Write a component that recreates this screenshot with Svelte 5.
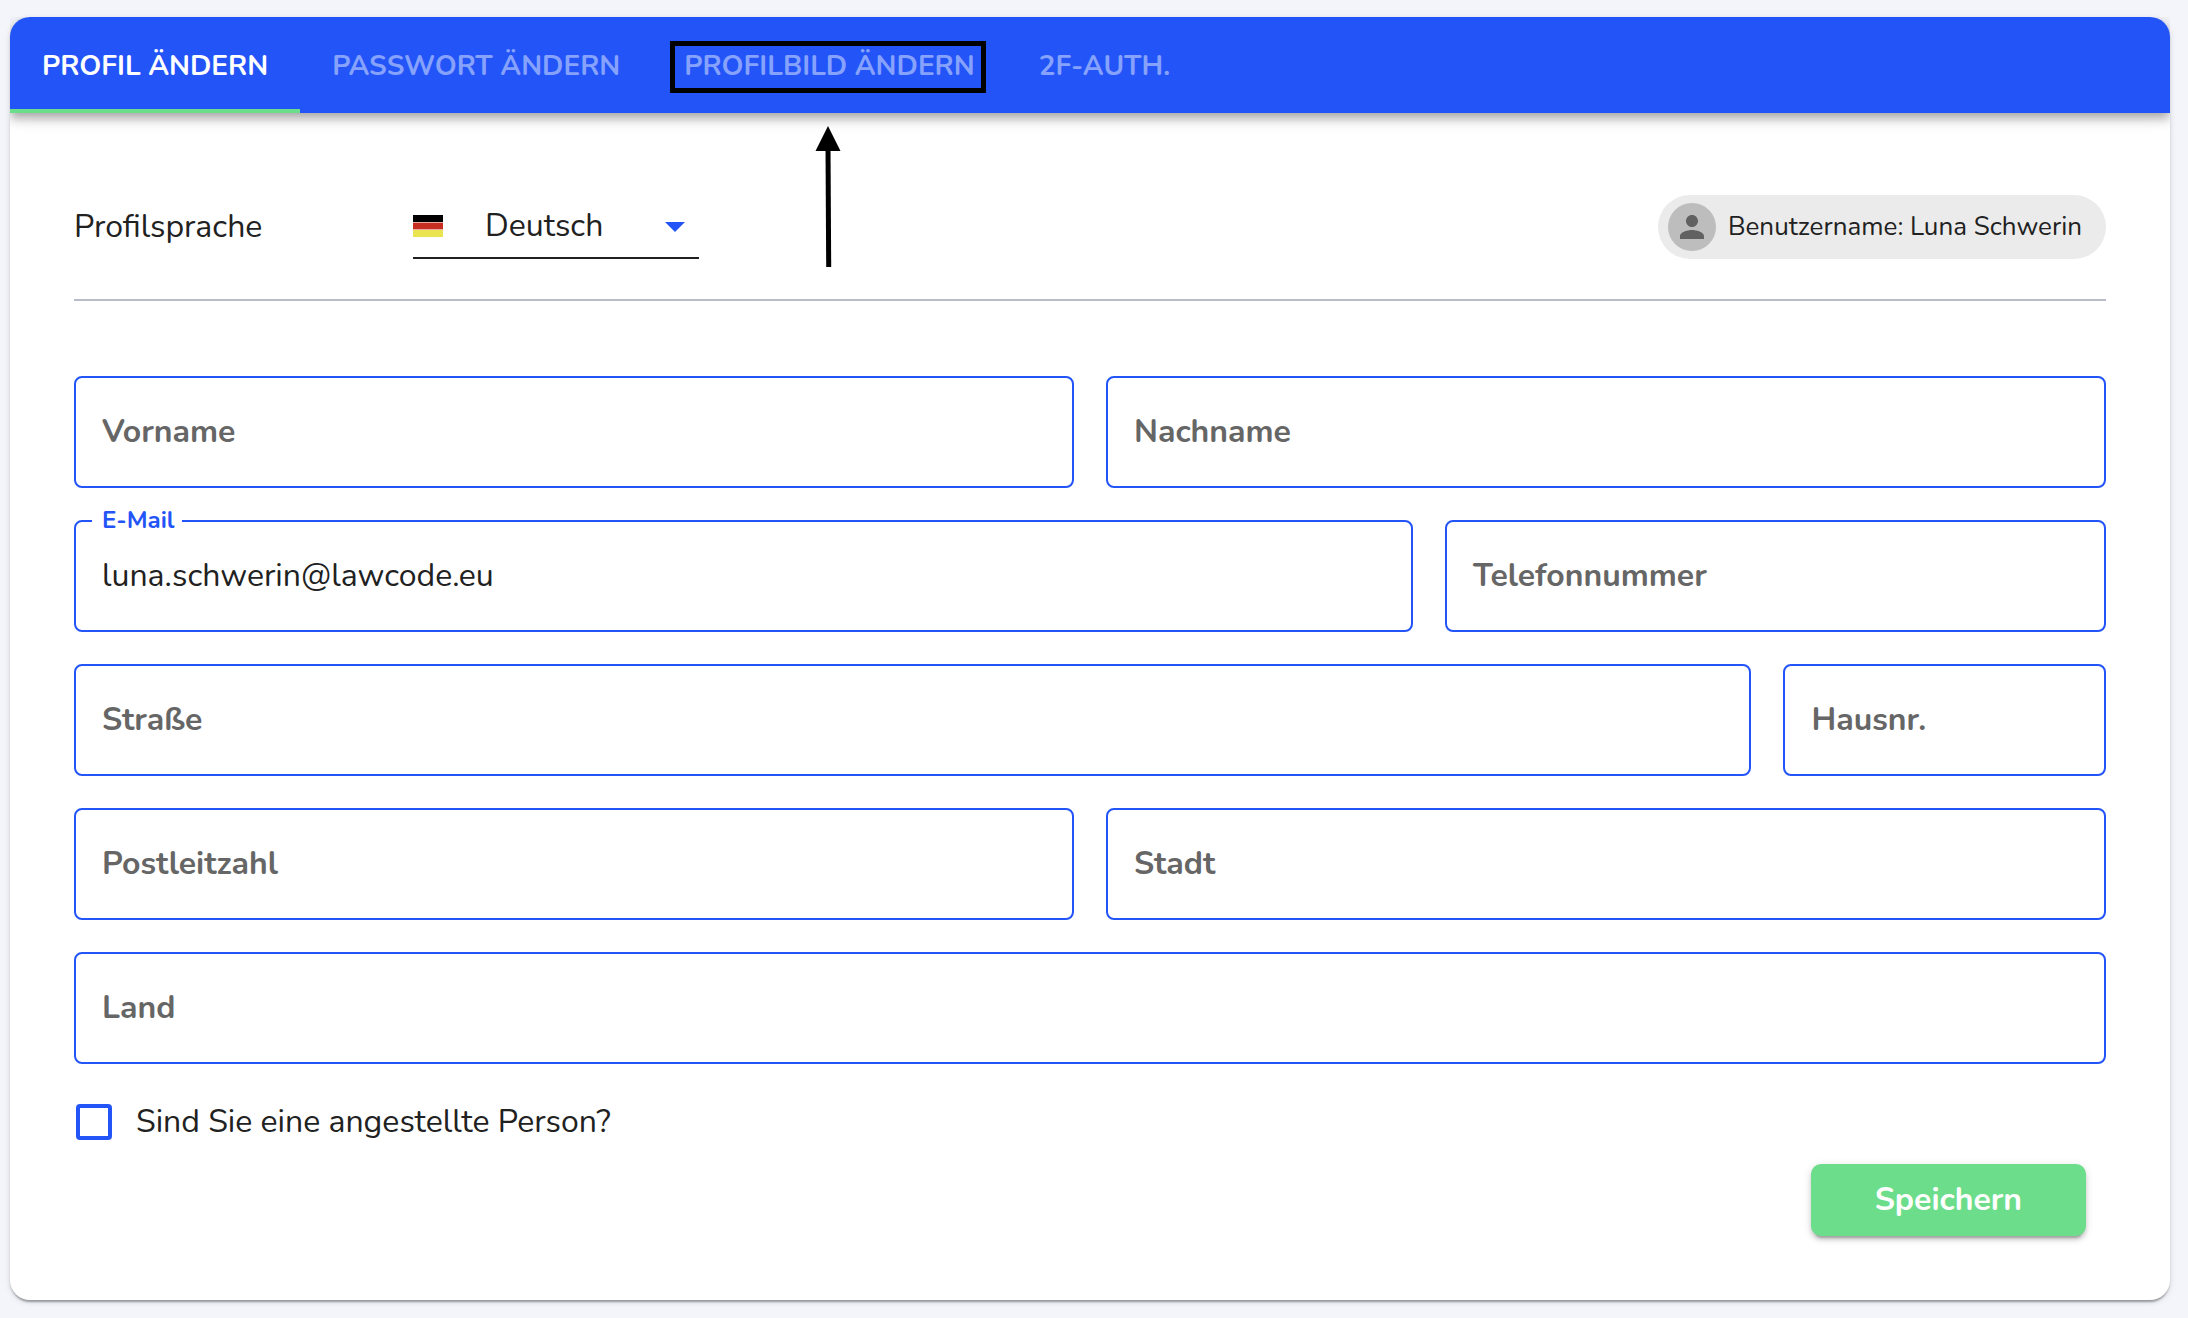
<script lang="ts">
  type Tab = { id: string; label: string; marked?: boolean };
  type Field = { id: string; label: string; type?: string };

  const tabs: Tab[] = [
    { id: 'profile', label: 'PROFIL ÄNDERN' },
    { id: 'password', label: 'PASSWORT ÄNDERN' },
    { id: 'picture', label: 'PROFILBILD ÄNDERN', marked: true },
    { id: 'twofactor', label: '2F-AUTH.' }
  ];

  const rows: { layout: string; fields: Field[] }[] = [
    { layout: 'half', fields: [{ id: 'firstName', label: 'Vorname' }, { id: 'lastName', label: 'Nachname' }] },
    { layout: 'two-thirds', fields: [{ id: 'email', label: 'E-Mail', type: 'email' }, { id: 'phone', label: 'Telefonnummer', type: 'tel' }] },
    { layout: 'street', fields: [{ id: 'street', label: 'Straße' }, { id: 'houseNumber', label: 'Hausnr.' }] },
    { layout: 'half', fields: [{ id: 'zip', label: 'Postleitzahl' }, { id: 'city', label: 'Stadt' }] },
    { layout: 'full', fields: [{ id: 'country', label: 'Land' }] }
  ];

  let activeTab = $state('profile');
  let language = $state('de');
  let employed = $state(false);
  let values: Record<string, string> = $state({
    firstName: '',
    lastName: '',
    email: 'luna.schwerin@lawcode.eu',
    phone: '',
    street: '',
    houseNumber: '',
    zip: '',
    city: '',
    country: ''
  });

  function save(e: SubmitEvent): void {
    e.preventDefault();
  }
</script>

<main class="page">
  <div class="card">
    <div class="tabs" role="tablist">
      {#each tabs as tab}
        <button
          type="button"
          role="tab"
          class="tab"
          class:active={activeTab === tab.id}
          aria-selected={activeTab === tab.id}
          onclick={() => (activeTab = tab.id)}
        >
          {tab.label}
          {#if tab.marked}
            <span class="marker"></span>
            <svg class="pointer" viewBox="0 0 24 141" aria-hidden="true">
              <path d="M12 0 24.500 25H-.5z" />
              <path d="M12 20 12.700 141" stroke="#000" stroke-width="5" />
            </svg>
          {/if}
        </button>
      {/each}
    </div>

    <form class="content" onsubmit={save}>
      <div class="top-row">
        <label class="language-label" for="language">Profilsprache</label>
        <div class="language">
          <svg class="flag" viewBox="0 0 30 22" aria-hidden="true">
            <rect width="30" height="22" fill="#eba9a0" />
            <rect width="30" height="7" fill="#000" />
            <rect y="8" width="30" height="6" fill="#c52e20" />
            <rect y="15" width="30" height="7" fill="#e9e44f" />
          </svg>
          <select id="language" bind:value={language}>
            <option value="de">Deutsch</option>
            <option value="en">English</option>
          </select>
          <svg class="caret" viewBox="0 0 20 12" aria-hidden="true"><path d="M0 2H20L10 12z" /></svg>
        </div>
        <div class="chip">
          <span class="avatar">
            <svg viewBox="0 0 24 24" aria-hidden="true">
              <path d="M12 12c2.210 0 4-1.790 4-4s-1.790-4-4-4-4 1.790-4 4 1.790 4 4 4zm0 2c-2.670 0-8 1.340-8 4v2h16v-2c0-2.660-5.330-4-8-4z" />
            </svg>
          </span>
          Benutzername: Luna Schwerin
        </div>
      </div>

      <div class="fields">
        {#each rows as row}
          <div class="row {row.layout}">
            {#each row.fields as field}
              <div class="field" class:filled={values[field.id]}>
                <input id={field.id} type={field.type ?? 'text'} bind:value={values[field.id]} />
                <label for={field.id}>{field.label}</label>
              </div>
            {/each}
          </div>
        {/each}
      </div>

      <div class="check">
        <input id="employed" type="checkbox" bind:checked={employed} />
        <label for="employed">Sind Sie eine angestellte Person?</label>
      </div>

      <div class="actions">
        <button type="submit" class="save">Speichern</button>
      </div>
    </form>
  </div>
</main>

<style>
  :global(body) {
    margin: 0;
    background: #f4f5fb;
  }
  .page {
    padding: 17px 18px 18px 10px;
    font-family: Nunito, Lato, 'Liberation Sans', sans-serif;
    font-size: 32px;
    color: #212121;
  }
  .card {
    border-radius: 20px;
    background: #fff;
    box-shadow:
      0 4px 2px -2px rgba(0, 0, 0, 0.2),
      0 2px 2px rgba(0, 0, 0, 0.14),
      0 2px 6px rgba(0, 0, 0, 0.12);
  }
  button,
  input,
  select {
    margin: 0;
    font: inherit;
    color: inherit;
  }

  /* Tabs */
  .tabs {
    display: flex;
    position: relative;
    height: 96px;
    border-radius: 20px 20px 0 0;
    background: #2254f8;
    box-shadow:
      0 4px 8px -2px rgba(0, 0, 0, 0.2),
      0 8px 10px rgba(0, 0, 0, 0.14),
      0 2px 20px rgba(0, 0, 0, 0.12);
    /* keeps the shadow inside the card's side edges */
    clip-path: inset(0 0 -200px 0);
  }
  .tab {
    position: relative;
    padding: 6px 32px 0;
    border: 0;
    border-bottom: 4px solid transparent;
    background: none;
    font-size: 28px;
    font-weight: 700;
    color: #86a2fc;
    cursor: pointer;
  }
  .tab.active {
    border-bottom-color: #6cdd8b;
    color: #fff;
  }
  .marker {
    position: absolute;
    top: 24px;
    left: 18px;
    right: 21px;
    height: 42px;
    border: 5px solid #000;
  }
  .pointer {
    position: absolute;
    top: 109px;
    left: calc(50% - 14px);
    width: 24px;
    height: 141px;
    overflow: visible;
  }

  /* Language and user */
  .content {
    padding: 81px 64px 64px;
  }
  .top-row {
    display: flex;
    align-items: center;
    padding-bottom: 40px;
    border-bottom: 2px solid #b9bdc9;
  }
  .language-label {
    width: 339px;
  }
  .language {
    display: flex;
    align-items: center;
    box-sizing: border-box;
    width: 286px;
    height: 65px;
    padding-right: 14px;
    border-bottom: 2px solid #212121;
  }
  .flag {
    width: 30px;
    height: 22px;
  }
  select {
    flex: 1;
    min-width: 0;
    padding: 0 0 0 42px;
    border: 0;
    outline: 0;
    background: none;
    appearance: none;
  }
  .caret {
    width: 20px;
    height: 12px;
    fill: #2254f8;
  }
  .chip {
    display: flex;
    align-items: center;
    gap: 12px;
    height: 64px;
    margin-left: auto;
    padding: 0 24px 0 10px;
    border-radius: 32px;
    background: #ebebeb;
    font-size: 26px;
  }
  .avatar {
    display: flex;
    align-items: center;
    justify-content: center;
    width: 48px;
    height: 48px;
    border-radius: 50%;
    background: #bdbdbd;
  }
  .avatar svg {
    width: 36px;
    height: 36px;
    fill: #616161;
  }

  /* Form fields */
  .fields {
    display: flex;
    flex-direction: column;
    gap: 32px;
    margin-top: 75px;
  }
  .row {
    display: grid;
    gap: 32px;
  }
  .half {
    grid-template-columns: 1fr 1fr;
  }
  .two-thirds {
    grid-template-columns: 1339fr 661fr;
  }
  .street {
    grid-template-columns: 26fr 5fr;
  }
  .field {
    position: relative;
  }
  .field input {
    display: block;
    box-sizing: border-box;
    width: 100%;
    height: 112px;
    padding: 0 26px 2px;
    border: 2px solid #2254f8;
    border-radius: 8px;
    outline: 0;
    background: #fff;
  }
  .field label {
    position: absolute;
    top: 36px;
    left: 28px;
    line-height: 40px;
    font-weight: 700;
    color: #666;
    cursor: text;
  }
  .field.filled label,
  .field:focus-within label {
    top: -20px;
    left: 18px;
    padding: 0 8px 0 10px;
    background: #fff;
    font-size: 24px;
    color: #2254f8;
  }

  /* Checkbox and submit */
  .check {
    display: flex;
    align-items: center;
    gap: 24px;
    height: 36px;
    margin-top: 40px;
    padding-left: 2px;
  }
  .check label {
    padding-bottom: 2px;
  }
  .check input {
    box-sizing: border-box;
    width: 36px;
    height: 36px;
    border: 4px solid #2254f8;
    border-radius: 4px;
    background: #fff;
    appearance: none;
  }
  .check input:checked {
    background: #2254f8;
  }
  .actions {
    display: flex;
    justify-content: flex-end;
    margin-top: 24px;
    padding-right: 20px;
  }
  .save {
    height: 72px;
    padding: 0 64px 2px;
    border: 0;
    border-radius: 10px;
    background: #6cdd8b;
    box-shadow:
      0 6px 2px -4px rgba(0, 0, 0, 0.2),
      0 4px 4px rgba(0, 0, 0, 0.14),
      0 2px 10px rgba(0, 0, 0, 0.12);
    font-weight: 700;
    color: #fff;
    cursor: pointer;
  }
</style>
